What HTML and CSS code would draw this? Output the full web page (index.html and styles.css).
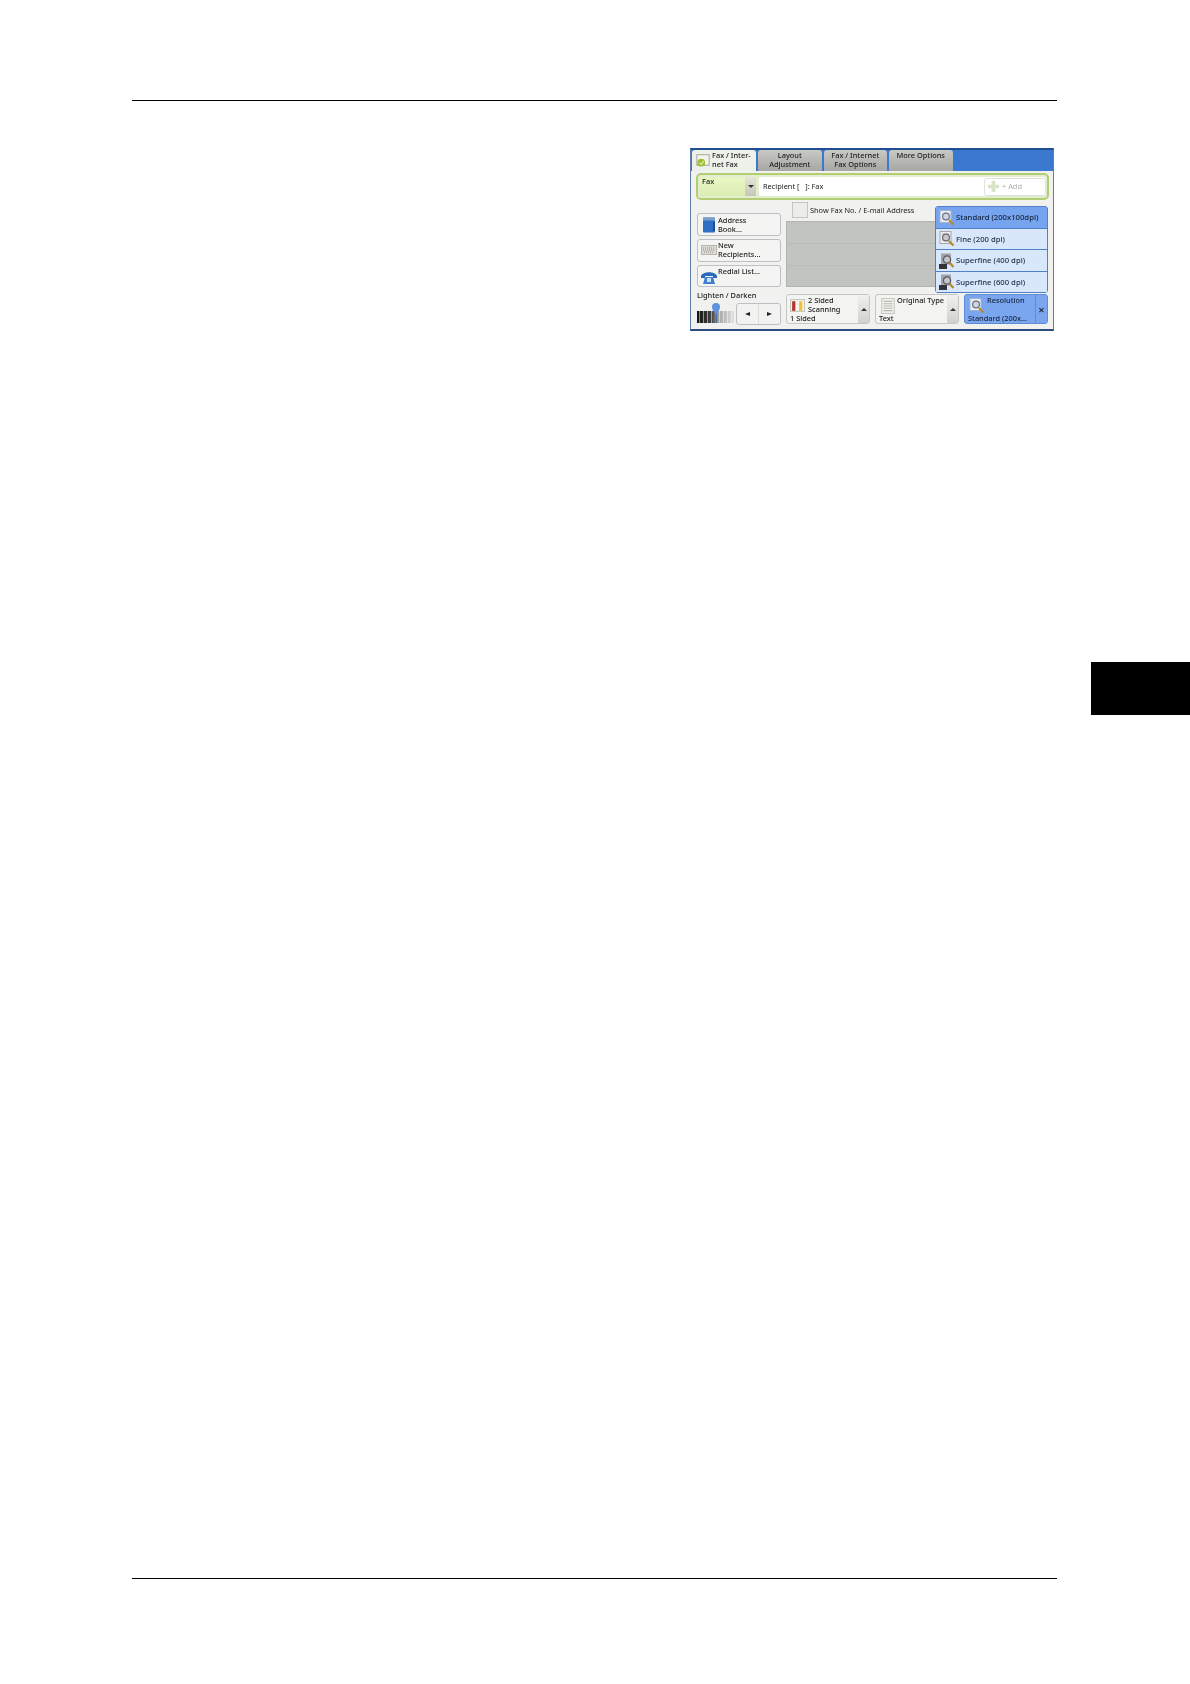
FILE: index.html
```html
<!DOCTYPE html>
<html lang="en">
<head>
<meta charset="utf-8">
<title>Fax resolution</title>
<link rel="stylesheet" href="styles.css">
</head>
<body>
<div class="page">
  <div class="rule rule-top"></div>
  <div class="content">
    <div class="panel">
      <div class="tabs">
        <div class="tab tab-active">
          <svg class="tab-icon" viewBox="0 0 16 16"><rect x="1" y="2" width="14" height="12" fill="#f4f4ee" stroke="#9a9a90"/><circle cx="6" cy="11" r="4.4" fill="#9bc02e"/><path d="M4 11l2 2 3-4" fill="none" stroke="#e6f0b8" stroke-width="1.2"/></svg>
          <span>Fax / Inter-<br>net Fax</span>
        </div>
        <div class="tab"><span>Layout<br>Adjustment</span></div>
        <div class="tab"><span>Fax / Internet<br>Fax Options</span></div>
        <div class="tab tab-single"><span>More Options</span></div>
      </div>
      <div class="address-bar">
        <div class="fax-select">
          <div class="fax-label">Fax</div>
          <div class="fax-arrow"><i class="tri-down"></i></div>
        </div>
        <div class="recipient">
          <span>Recipient [&nbsp;&nbsp;&nbsp;]: Fax</span>
          <div class="add-btn">
            <svg class="add-icon" viewBox="0 0 14 14"><path d="M5 1h4v4h4v4H9v4H5V9H1V5h4z" fill="#d9e3c8"/></svg>
            <span>+ Add</span>
          </div>
        </div>
      </div>
      <div class="main">
        <div class="left-col">
          <div class="side-btn">
            <svg class="side-icon" viewBox="0 0 14 16"><rect x="1" y="0.5" width="12" height="15" rx="1" fill="#2f6fc4"/><rect x="1" y="0.5" width="12" height="3" fill="#7f9fc9"/><rect x="11" y="5" width="2" height="9" fill="#1c4d96"/></svg>
            <span>Address<br>Book...</span>
          </div>
          <div class="side-btn">
            <svg class="side-icon" viewBox="0 0 16 12"><rect x="0.5" y="1.5" width="15" height="9" fill="#dcdcd4" stroke="#b4b4ac"/><path d="M2 4h12M2 6h12M3 8h10" stroke="#8e8e86" stroke-dasharray="1 1"/></svg>
            <span>New<br>Recipients...</span>
          </div>
          <div class="side-btn side-btn-top">
            <svg class="side-icon side-icon-low" viewBox="0 0 16 14"><path d="M0 5c2-5 14-5 16 0v2h-4V5H4v2H0z" fill="#2a68b8"/><path d="M4 6h8l2 7H2z" fill="#3f7fd0"/><rect x="6" y="7" width="4" height="4" fill="#cfe0f4"/></svg>
            <span>Redial List...</span>
          </div>
        </div>
        <div class="center-col">
          <div class="show-row">
            <div class="checkbox"></div>
            <span>Show Fax No. / E-mail Address</span>
          </div>
          <div class="list">
            <div class="list-row"></div>
            <div class="list-row"></div>
            <div class="list-row"></div>
          </div>
        </div>
      </div>
      <div class="bottom">
        <div class="lighten">
          <div class="lighten-label">Lighten / Darken</div>
          <div class="lighten-controls">
            <div class="slider">
              <svg class="slider-knob" viewBox="0 0 10 20"><path d="M4.4 8h1.2v12H4.4z" fill="#1f5cb0"/><path d="M1 4a4 4 0 0 1 8 0c0 3-2 4-4 8-2-4-4-5-4-8z" fill="#5c93dc"/></svg>
            </div>
            <div class="arrows">
              <div class="arrow"><i class="tri-left"></i></div>
              <div class="arrow"><i class="tri-right"></i></div>
            </div>
          </div>
        </div>
        <div class="feature">
          <div class="feature-body">
            <div class="feature-head">
              <svg class="feature-icon" viewBox="0 0 14 12"><rect x="0.5" y="0.5" width="13" height="11" fill="#f4f4f0" stroke="#c4c4bc"/><rect x="2" y="2" width="3" height="9" fill="#b3342b"/><rect x="8.5" y="2" width="3" height="9" fill="#f0c23a"/></svg>
              <span>2 Sided<br>Scanning</span>
            </div>
            <div class="feature-value">1 Sided</div>
          </div>
          <div class="feature-side"><i class="tri-up"></i></div>
        </div>
        <div class="feature">
          <div class="feature-body">
            <div class="feature-head">
              <svg class="feature-icon feature-icon-doc" viewBox="0 0 12 14"><rect x="0.5" y="0.5" width="11" height="13" fill="#f6f6f2" stroke="#c8c8c0"/><path d="M2 3h8M2 5h8M2 7h8M2 9h8M2 11h8" stroke="#b4b4ac"/></svg>
              <span class="feature-title">Original Type</span>
            </div>
            <div class="feature-value">Text</div>
          </div>
          <div class="feature-side"><i class="tri-up"></i></div>
        </div>
        <div class="feature feature-active">
          <div class="feature-body">
            <div class="feature-head">
              <svg class="feature-icon feature-icon-mag" viewBox="0 0 16 16"><rect x="1" y="0.5" width="11" height="12" fill="#e8eef6" stroke="#a4b4cc"/><circle cx="7" cy="6.5" r="3.4" fill="#cfd6e2" stroke="#6a7282" stroke-width="1.2"/><path d="M10 10l4.5 4.5" stroke="#b8862b" stroke-width="2.2"/></svg>
              <span class="feature-title">Resolution</span>
            </div>
            <div class="feature-value">Standard (200x...</div>
          </div>
          <div class="feature-side"><span class="close-x">×</span></div>
        </div>
      </div>
      <div class="menu">
        <div class="menu-item menu-item-on">
          <svg class="menu-icon" viewBox="0 0 16 16"><rect x="1" y="0.5" width="11" height="12" fill="#e8eef6" stroke="#a4b4cc"/><circle cx="7" cy="6.5" r="3.4" fill="#cfd6e2" stroke="#6a7282" stroke-width="1.2"/><path d="M10 10l4.5 4.5" stroke="#b8862b" stroke-width="2.2"/></svg>
          <span>Standard (200x100dpi)</span>
        </div>
        <div class="menu-item">
          <svg class="menu-icon" viewBox="0 0 16 16"><rect x="1" y="0.5" width="11" height="12" fill="#ececec" stroke="#a8a8b0"/><path d="M3 3h7M3 5h7M3 7h7M3 9h7" stroke="#c0c0c6"/><circle cx="7" cy="6.5" r="3.4" fill="#c8c8ce" stroke="#6a6a74" stroke-width="1.2"/><path d="M10 10l4.5 4.5" stroke="#b8862b" stroke-width="2.2"/></svg>
          <span>Fine (200 dpi)</span>
        </div>
        <div class="menu-item">
          <svg class="menu-icon" viewBox="0 0 16 16"><rect x="2" y="0.5" width="10" height="11" fill="#a2a2aa"/><circle cx="8" cy="6.5" r="3.6" fill="#c4c4cc" stroke="#5c5c64" stroke-width="1.3"/><path d="M10.5 9.5l4 4.5" stroke="#b8862b" stroke-width="2.2"/><rect x="0" y="11" width="8" height="5" fill="#33333a"/></svg>
          <span>Superfine (400 dpi)</span>
        </div>
        <div class="menu-item">
          <svg class="menu-icon" viewBox="0 0 16 16"><rect x="2" y="0.5" width="10" height="11" fill="#a2a2aa"/><circle cx="8" cy="6.5" r="3.6" fill="#c4c4cc" stroke="#5c5c64" stroke-width="1.3"/><path d="M10.5 9.5l4 4.5" stroke="#b8862b" stroke-width="2.2"/><rect x="0" y="11" width="8" height="5" fill="#33333a"/></svg>
          <span>Superfine (600 dpi)</span>
        </div>
      </div>
    </div>
  </div>
  <div class="rule rule-bottom"></div>
  <div class="chapter-tab"></div>
</div>
</body>
</html>
```

FILE: styles.css
```css
html, body { margin: 0; padding: 0; background: #fff; }
.page {
  position: relative;
  width: 1190px;
  height: 1684px;
  padding: 100px 133px 0 132px;
  box-sizing: border-box;
  font-family: "Noto Sans", "Liberation Sans", sans-serif;
  overflow: hidden;
}
.rule { height: 1.4px; background: #000; }
.content { display: flex; justify-content: flex-end; padding: 47px 3px 0 0; height: 1476.6px; box-sizing: border-box; }
.chapter-tab {
  position: absolute;
  left: 1091px;
  top: 662px;
  width: 99px;
  height: 53px;
  background: #000;
}

/* control panel */
.panel {
  position: relative;
  width: 364px;
  height: 183px;
  box-sizing: border-box;
  background: #f1f2ef;
  border: 1px solid #5d7fae;
  border-top: 2px solid #1f4f8f;
  border-bottom: 2px solid #2b4d7e;
  font-size: 7.4px;
  line-height: 9px;
  color: #222;
  filter: blur(0.4px);
}
.tabs {
  display: flex;
  gap: 2px;
  height: 21px;
  padding-left: 1px;
  background: #3b78d0;
}
.tab {
  width: 63.5px;
  height: 21px;
  box-sizing: border-box;
  padding-top: 1px;
  border-radius: 3px 3px 0 0;
  background: linear-gradient(#c8c8c4, #a6a6a2);
  text-align: center;
  font-weight: 500;
  color: #222;
}
.tab-active {
  display: flex;
  gap: 2px;
  width: 64px;
  padding-left: 4px;
  background: #eef0ea;
  text-align: left;
}
.tab-icon { width: 14px; height: 14px; margin-top: 2px; flex: none; }

.address-bar {
  display: flex;
  gap: 3px;
  height: 27px;
  margin: 2px 4px 0 5px;
  padding: 2px 1px 2px 1px;
  box-sizing: border-box;
  background: #e3eed0;
  border: 2px solid #b3ce72;
  border-radius: 5px;
}
.fax-select { display: flex; width: 57px; background: linear-gradient(#e9f6c4, #dcedb4); border-radius: 3px; font-weight: 500; }
.fax-label { flex: 1; padding: 0 0 0 3px; }
.fax-arrow { width: 11px; display: flex; align-items: center; justify-content: center; background: linear-gradient(#e4e7d4, #c4c7b8); }
.recipient {
  flex: 1;
  display: flex;
  justify-content: space-between;
  align-items: center;
  padding-left: 4px;
  background: #fff;
  border-radius: 2px;
}
.add-btn {
  display: flex;
  align-items: center;
  gap: 2px;
  width: 62px;
  height: 18px;
  box-sizing: border-box;
  padding-left: 2px;
  border: 1px solid #dde3dc;
  border-radius: 3px;
  color: #a9afa9;
}
.add-icon { width: 13px; height: 13px; }

.main { display: flex; gap: 5px; padding: 2px 0 0 6px; height: 88px; box-sizing: border-box; }
.left-col { display: flex; flex-direction: column; gap: 3px; width: 84px; padding-top: 11px; }
.side-btn {
  display: flex;
  gap: 1px;
  align-items: center;
  height: 22.7px;
  box-sizing: border-box;
  padding-left: 3px;
  background: #f4f5f2;
  border: 1px solid #bcc0c4;
  border-radius: 3px;
  font-weight: 500;
}
.side-btn-top { align-items: flex-start; padding-top: 1px; }
.side-icon { width: 16px; height: 16px; flex: none; }
.side-icon-low { margin-top: 3px; }
.center-col { display: flex; flex-direction: column; width: 150px; }
.show-row { display: flex; gap: 2px; align-items: center; height: 16px; padding-left: 6px; }
.checkbox { width: 16px; height: 16px; background: #ecedea; border: 1px solid #c4c6c2; box-sizing: border-box; }
.list { margin-top: 3px; display: flex; flex-direction: column; gap: 1px; background: #b9bbb9; height: 66px; border: 1px solid #b2b4b2; box-sizing: border-box; }
.list-row { flex: 1; background: #c2c4c2; }

.bottom { display: flex; gap: 5px; padding: 6px 0 0 6px; align-items: flex-start; }
.lighten { width: 84px; margin-top: -3px; }
.lighten-label { font-weight: 500; line-height: 9px; }
.lighten-controls { display: flex; gap: 2px; align-items: flex-start; margin-top: 3px; }
.slider {
  position: relative;
  width: 37px;
  height: 12px;
  margin-top: 8px;
  background:
    repeating-linear-gradient(90deg, transparent 0 2px, rgba(255,255,255,.5) 2px 3px, transparent 3px 4px),
    linear-gradient(90deg, #111 0, #444 40%, #aaa 60%, #ddd 100%);
}
.slider-knob { position: absolute; left: 14px; top: -8px; width: 10px; height: 20px; }
.arrows { display: flex; width: 45px; height: 22px; background: #f2f3f0; border: 1px solid #bcc0c4; border-radius: 3px; box-sizing: border-box; }
.arrow { flex: 1; display: flex; align-items: center; justify-content: center; }
.arrow + .arrow { border-left: 1px solid #dcdedb; }
.feature {
  display: flex;
  width: 84px;
  height: 30px;
  box-sizing: border-box;
  background: #f3f4f1;
  border: 1px solid #c4c7c6;
  border-radius: 3px;
  font-weight: 500;
}
.feature-body { flex: 1; display: flex; flex-direction: column; justify-content: space-between; padding: 1px 0 0 3px; min-width: 0; }
.feature-head { display: flex; gap: 2px; }
.feature-icon { width: 15px; height: 13px; margin: 3px 1px 0 0; flex: none; }
.feature-icon-doc { margin: 2px 0 0 2px; width: 14px; height: 16px; }
.feature-icon-mag { width: 16px; height: 16px; margin: 2px 0 0 1px; }
.feature-title { white-space: nowrap; }
.feature-value { white-space: nowrap; line-height: 9px; padding-bottom: 1px; }
.feature-side { width: 11px; display: flex; align-items: center; justify-content: center; background: linear-gradient(#f0f1ee, #cfd1cd); }
.feature-active { background: #7aa6f0; border-color: #5f8bd2; color: #16233d; }
.feature-active .feature-side { background: #7aa6f0; border-left: 1px solid #5f8bd2; }
.close-x { font-size: 11px; font-weight: 700; color: #26354f; }

.tri-down, .tri-up, .tri-left, .tri-right { display: block; width: 0; height: 0; border-style: solid; border-color: transparent; }
.tri-down { border-width: 3px 3px 0; border-top-color: #333; }
.tri-up { border-width: 0 3.5px 3px; border-bottom-color: #333; }
.tri-left { border-width: 2.5px 5px 2.5px 0; border-right-color: #222; }
.tri-right { border-width: 2.5px 0 2.5px 5px; border-left-color: #222; }

/* resolution drop-down */
.menu {
  position: absolute;
  left: 244px;
  top: 56px;
  width: 113px;
  height: 87px;
  display: flex;
  flex-direction: column;
  box-sizing: border-box;
  border: 1px solid #4f80c9;
  border-radius: 3px;
  background: #4f80c9;
  gap: 1px;
  font-size: 7.7px;
}
.menu-item {
  flex: 1;
  display: flex;
  align-items: center;
  gap: 1px;
  padding-left: 3px;
  background: #d9e7fb;
  color: #1f2c46;
  font-weight: 500;
}
.menu-item-on { background: #77a4ee; color: #16233d; }
.menu-icon { width: 16px; height: 16px; flex: none; }
```
